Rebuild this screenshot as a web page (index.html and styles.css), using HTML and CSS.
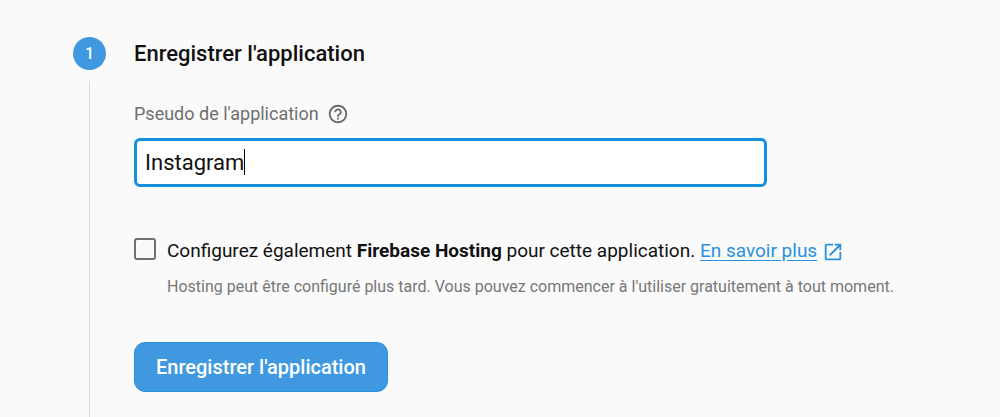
FILE: index.html
```
<!DOCTYPE html>
<html lang="fr">
<head>
    <meta charset="UTF-8">
    <meta name="viewport" content="width=device-width, initial-scale=1.0">
    <title>Enregistrer l'application</title>
    <link rel="stylesheet" href="styles.css">
</head>
<body>
    <form class="step">
        <div class="step-rail">
            <span class="step-number">1</span>
            <span class="step-line"></span>
        </div>

        <div class="step-content">
            <h2>Enregistrer l'application</h2>

            <div class="field-label">
                <label for="appName">Pseudo de l'application</label>
                <svg class="help-icon" viewBox="0 0 24 24" aria-hidden="true">
                    <path d="M11 18h2v-2h-2v2zm1-16C6.48 2 2 6.48 2 12s4.48 10 10 10 10-4.48 10-10S17.52 2 12 2zm0 18c-4.41 0-8-3.59-8-8s3.59-8 8-8 8 3.59 8 8-3.59 8-8 8zm0-14c-2.21 0-4 1.79-4 4h2c0-1.1.9-2 2-2s2 .9 2 2c0 2-3 1.75-3 5h2c0-2.25 3-2.5 3-5 0-2.21-1.79-4-4-4z"/>
                </svg>
            </div>
            <div class="field">
                <input type="text" id="appName" value="Instagram" autocomplete="off" spellcheck="false">
                <span class="caret"></span>
            </div>

            <div class="hosting">
                <input type="checkbox" id="hosting">
                <div class="hosting-text">
                    <label for="hosting">Configurez également <b>Firebase Hosting</b> pour cette application.</label>
                    <a href="#">En savoir plus</a>
                    <svg class="open-icon" viewBox="0 0 24 24" aria-hidden="true">
                        <path d="M19 19H5V5h7V3H5c-1.11 0-2 .9-2 2v14c0 1.1.89 2 2 2h14c1.1 0 2-.9 2-2v-7h-2v7zM14 3v2h3.59l-9.83 9.83 1.41 1.41L19 6.41V10h2V3h-7z"/>
                    </svg>
                    <p>Hosting peut être configuré plus tard. Vous pouvez commencer à l'utiliser gratuitement à tout moment.</p>
                </div>
            </div>

            <button type="button">Enregistrer l'application</button>
        </div>
    </form>
</body>
</html>
```
FILE: styles.css
```
body {
    margin: 0;
    font-family: Roboto, Arial, sans-serif;
    background-color: #fafafa;
    color: #111;
}
.step {
    display: flex;
    gap: 28px;
    min-height: 100vh;
    box-sizing: border-box;
    padding: 37px 40px 0 73px;
}
.step-rail {
    display: flex;
    flex-direction: column;
    align-items: center;
    gap: 11px;
}
.step-number {
    width: 33px;
    height: 33px;
    border-radius: 50%;
    background-color: #4099e0;
    color: white;
    font-size: 16px;
    font-weight: 500;
    line-height: 33px;
    text-align: center;
}
.step-line {
    flex: 1;
    width: 1px;
    background-color: #d8d8d8;
}
.step-content {
    flex: 1;
    padding-bottom: 25px;
}
h2 {
    margin: 0;
    font-size: 22px;
    font-weight: 500;
    line-height: 33px;
}
.field-label {
    display: flex;
    align-items: center;
    gap: 8px;
    margin-top: 32px;
    font-size: 18px;
    line-height: 24px;
    color: #6f6f6f;
}
.help-icon {
    width: 22px;
    height: 22px;
    fill: #686868;
}
.field {
    position: relative;
    max-width: 633px;
    margin-top: 12px;
}
.field input {
    display: block;
    width: 100%;
    height: 49px;
    box-sizing: border-box;
    padding: 0 8px;
    border: 3px solid #1590dc;
    border-radius: 6px;
    outline: none;
    background-color: white;
    color: #111;
    font-family: inherit;
    font-size: 22px;
}
/* text cursor at the end of the value */
.caret {
    position: absolute;
    top: 11px;
    left: 110px;
    width: 1px;
    height: 26px;
    background-color: black;
}
.hosting {
    display: flex;
    align-items: flex-start;
    gap: 11px;
    margin-top: 51px;
}
.hosting input {
    appearance: none;
    flex: none;
    width: 22px;
    height: 22px;
    margin: 0;
    border: 2px solid #707070;
    border-radius: 3px;
}
.hosting input:checked {
    background-color: #4099e0;
}
.hosting-text {
    font-size: 19px;
    line-height: 26px;
}
.hosting b {
    font-weight: 700;
}
.hosting a {
    color: #2b90dc;
    text-underline-offset: 3px;
}
.open-icon {
    width: 22px;
    height: 22px;
    vertical-align: -6px;
    fill: #2b90dc;
}
.hosting p {
    margin: 12px 0 0;
    font-size: 16px;
    line-height: 22px;
    color: #777;
}
button {
    height: 50px;
    margin-top: 44px;
    padding: 0 21px;
    border: 1px solid #2b90dc;
    border-radius: 11px;
    background-color: #4099e0;
    color: white;
    font-family: inherit;
    font-size: 20px;
    font-weight: 500;
}
```
